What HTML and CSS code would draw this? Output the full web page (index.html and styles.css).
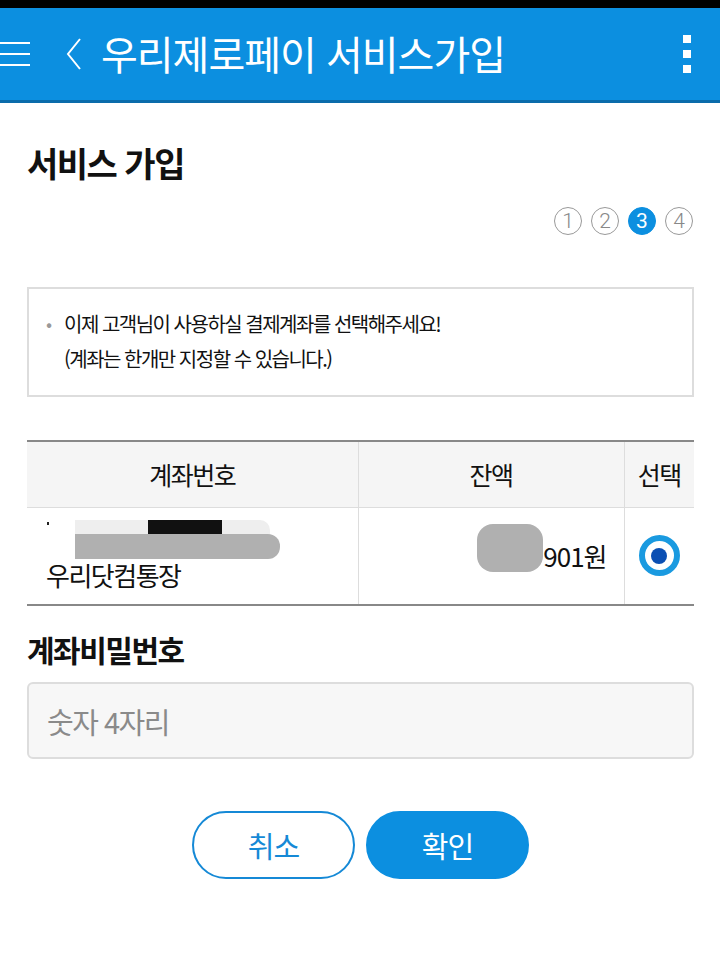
FILE: index.html
```html
<!DOCTYPE html>
<html lang="ko">
  <head>
    <meta charset="UTF-8" />
    <meta name="viewport" content="width=device-width, initial-scale=1.0" />
    <title>우리제로페이 서비스가입</title>
    <link rel="stylesheet" href="styles.css">
  </head>
  <body>
    <div class="statusbar"></div>
    <header class="appbar">
      <div class="appbar-left">
        <svg class="menu-icon" width="32" height="28" viewBox="0 0 32 28">
          <path d="M0 3h30M0 14h30M0 25h30" stroke="#fff" stroke-width="2" fill="none" />
        </svg>
        <svg class="back-icon" width="18" height="34" viewBox="0 0 18 34">
          <path d="M15 2L3 17l12 15" stroke="#fff" stroke-width="2" fill="none" />
        </svg>
        <h1>우리제로페이 서비스가입</h1>
      </div>
      <div class="kebab">
        <span></span><span></span><span></span>
      </div>
    </header>

    <main class="content">
      <h2 class="page-title">서비스 가입</h2>

      <div class="steps">
        <span class="step">1</span>
        <span class="step">2</span>
        <span class="step active">3</span>
        <span class="step">4</span>
      </div>

      <div class="notice">
        <span class="bullet">•</span>
        <p>이제 고객님이 사용하실 결제계좌를 선택해주세요!<br>(계좌는 한개만 지정할 수 있습니다.)</p>
      </div>

      <table class="accounts">
        <thead>
          <tr>
            <th class="col-no">계좌번호</th>
            <th class="col-bal">잔액</th>
            <th class="col-sel">선택</th>
          </tr>
        </thead>
        <tbody>
          <tr>
            <td class="col-no">
              <div class="masked">
                <span class="tick"></span>
                <span class="mask-light"></span>
                <span class="mask-black"></span>
                <span class="mask-gray"></span>
              </div>
              <div class="acc-name">우리닷컴통장</div>
            </td>
            <td class="col-bal">
              <span class="balance"><span class="mask-blob"></span>901원</span>
            </td>
            <td class="col-sel">
              <span class="radio checked"></span>
            </td>
          </tr>
        </tbody>
      </table>

      <h3 class="field-label">계좌비밀번호</h3>
      <input class="pin-input" type="password" placeholder="숫자 4자리">

      <div class="actions">
        <button class="btn btn-outline">취소</button>
        <button class="btn btn-primary">확인</button>
      </div>
    </main>
  </body>
</html>
```

FILE: styles.css
```css
body {
  margin: 0;
  width: 720px;
  font-family: "Noto Sans CJK KR", "Noto Sans", sans-serif;
  color: #111;
  background-color: #fff;
}

.statusbar {
  height: 8px;
  background-color: #000;
}

.appbar {
  display: flex;
  align-items: center;
  justify-content: space-between;
  height: 92px;
  background-color: #0c8fe0;
  border-bottom: 3px solid #0a6cab;
}

.appbar-left {
  display: flex;
  align-items: center;
}

.back-icon {
  margin-left: 33px;
  margin-right: 18px;
}

.appbar h1 {
  margin: 0;
  color: #fff;
  font-size: 40px;
  font-weight: 400;
  letter-spacing: -1px;
  line-height: 1;
  padding-bottom: 2px;
}

.kebab {
  display: flex;
  flex-direction: column;
  gap: 7px;
  margin-right: 29px;
}

.kebab span {
  width: 8px;
  height: 8px;
  background-color: #fff;
}

.content {
  padding: 0 26px 0 27px;
}

.page-title {
  margin: 40px 0 0 0;
  font-size: 34px;
  font-weight: 700;
  letter-spacing: -1.5px;
  line-height: 40px;
}

.steps {
  display: flex;
  justify-content: flex-end;
  gap: 9px;
  margin-top: 24px;
  margin-right: 1px;
}

.step {
  display: flex;
  align-items: center;
  justify-content: center;
  box-sizing: border-box;
  width: 28px;
  height: 28px;
  border: 1.5px solid #999;
  border-radius: 50%;
  color: #888;
  font-family: Roboto, "Noto Sans", sans-serif;
  font-size: 21px;
  font-weight: 300;
}

.step.active {
  background-color: #0c8fe0;
  border-color: #0c8fe0;
  color: #fff;
  font-weight: 400;
}

.notice {
  display: flex;
  margin-top: 52px;
  padding: 17px 18px 19px 17px;
  border: 2px solid #ddd;
}

.notice .bullet {
  color: #999;
  font-size: 18px;
  line-height: 35px;
  width: 18px;
}

.notice p {
  margin: 0;
  font-size: 20px;
  letter-spacing: -1.5px;
  line-height: 35px;
  color: #111;
}

.accounts {
  width: 100%;
  margin-top: 43px;
  border-collapse: collapse;
  table-layout: fixed;
  border-top: 2px solid #888;
  border-bottom: 2px solid #888;
}

.accounts th,
.accounts td {
  box-sizing: border-box;
  padding: 0;
}

.accounts th {
  height: 66px;
  background-color: #f5f5f5;
  font-size: 25px;
  font-weight: 400;
  letter-spacing: -1.5px;
  border-bottom: 1px solid #ddd;
}

.accounts td {
  height: 98px;
  vertical-align: middle;
}

.accounts .col-no {
  width: 331px;
  border-right: 1px solid #ddd;
}

.accounts .col-bal {
  width: 266px;
  border-right: 1px solid #ddd;
}

.accounts .col-sel {
  text-align: center;
}

td.col-no {
  padding-left: 19px;
}

.masked {
  position: relative;
  height: 40px;
}

.masked span {
  position: absolute;
}

.tick {
  left: 1px;
  top: 2px;
  width: 2px;
  height: 3px;
  background-color: #222;
}

.mask-light {
  left: 29px;
  top: 0;
  width: 195px;
  height: 15px;
  background-color: #eee;
  border-radius: 0 10px 0 0;
}

.mask-black {
  left: 102px;
  top: 0;
  width: 74px;
  height: 14px;
  background-color: #111;
}

.mask-gray {
  left: 29px;
  top: 14px;
  width: 205px;
  height: 25px;
  background-color: #b0b0b0;
  border-radius: 0 12px 12px 0;
}

.acc-name {
  font-size: 26px;
  letter-spacing: -1.5px;
  line-height: 32px;
  margin-top: -1px;
}

td.col-bal {
  text-align: right;
  padding-right: 17px;
}

.balance {
  position: relative;
  font-size: 26px;
  letter-spacing: -1px;
}

.mask-blob {
  position: absolute;
  left: -66px;
  top: -13px;
  width: 66px;
  height: 48px;
  background-color: #b0b0b0;
  border-radius: 16px;
}

.radio {
  display: inline-block;
  box-sizing: border-box;
  width: 41px;
  height: 41px;
  border: 6px solid #1a9ae0;
  border-radius: 50%;
  vertical-align: middle;
  position: relative;
}

.radio.checked::after {
  content: "";
  position: absolute;
  left: 6.5px;
  top: 6.5px;
  width: 16px;
  height: 16px;
  border-radius: 50%;
  background-color: #0b4fb3;
}

.field-label {
  margin: 25px 0 0 0;
  font-size: 30px;
  font-weight: 700;
  letter-spacing: -1.5px;
  line-height: 36px;
}

.pin-input {
  display: block;
  box-sizing: border-box;
  width: 100%;
  height: 77px;
  margin-top: 15px;
  padding: 0 18px;
  border: 2px solid #ddd;
  border-radius: 6px;
  background-color: #f7f7f7;
  font-family: "Noto Sans CJK KR", sans-serif;
  font-size: 29px;
  letter-spacing: -1.5px;
}

.pin-input::placeholder {
  color: #8a8a8a;
}

.actions {
  display: flex;
  justify-content: center;
  gap: 11px;
  margin-top: 52px;
}

.btn {
  width: 163px;
  height: 68px;
  border-radius: 34px;
  font-family: "Noto Sans CJK KR", sans-serif;
  font-size: 29px;
  letter-spacing: -1px;
  cursor: pointer;
}

.btn-outline {
  background-color: #fff;
  border: 2px solid #1589d6;
  color: #1589d6;
}

.btn-primary {
  background-color: #0c8fe0;
  border: 2px solid #0c8fe0;
  color: #fff;
}
```
